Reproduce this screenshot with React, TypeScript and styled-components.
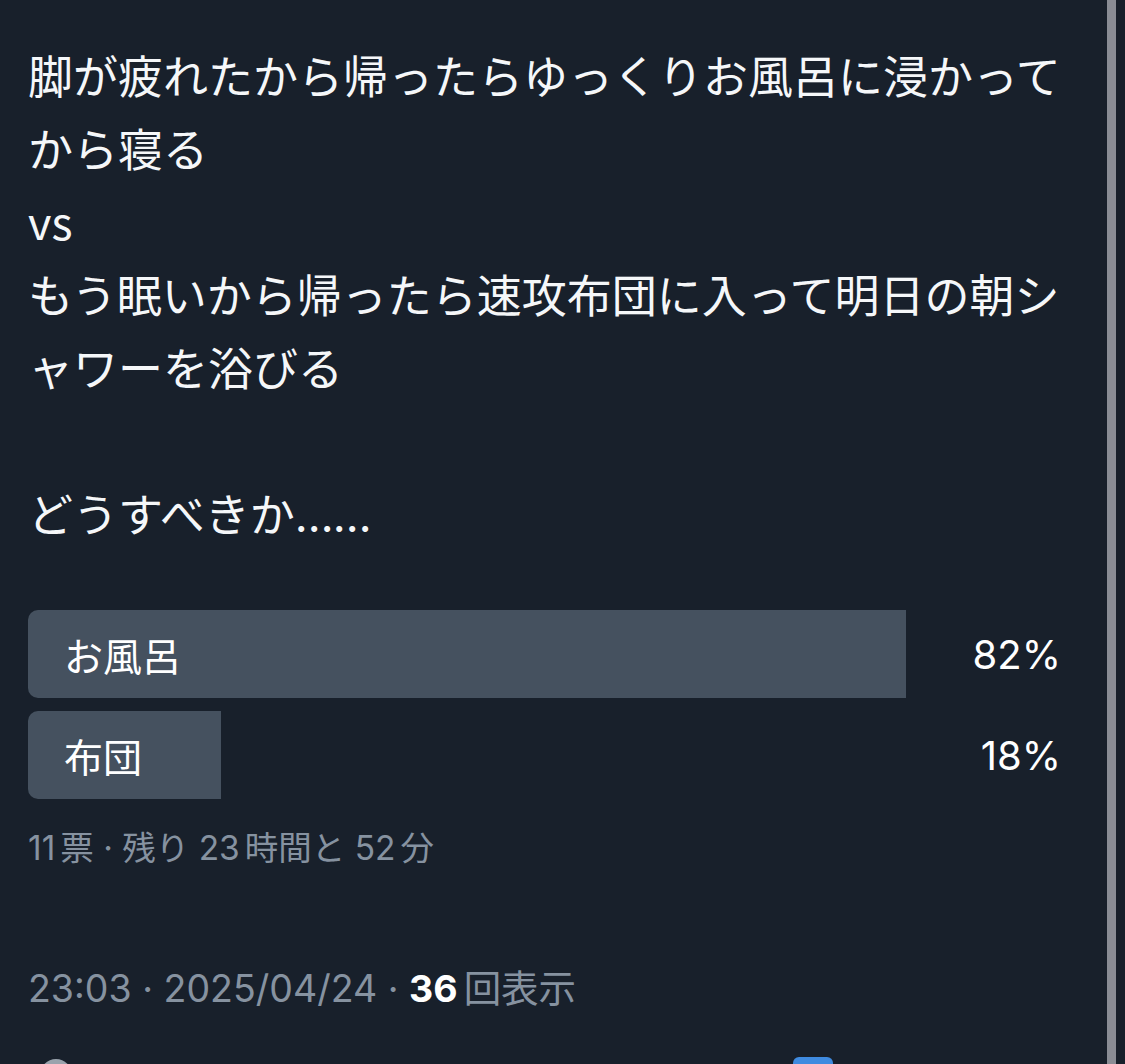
import React from "react";
import styled, { createGlobalStyle } from "styled-components";

const Global = createGlobalStyle`
  html, body { margin: 0; padding: 0; background: #18202b; }
  body { overflow: hidden; }
`;

const Page = styled.div`
  display: flex;
  width: 1125px;
  height: 1064px;
  overflow: hidden;
  background: #18202b;
`;

const Column = styled.main`
  width: 1107px;
  box-sizing: border-box;
  padding: 38px 0 0 28px;
  display: flex;
  flex-direction: column;
`;

const Divider = styled.div`
  width: 9px;
  height: 100%;
  background: #8a8d95;
`;

const Body = styled.div`
  color: #f5f7f9;
  font-family: "Noto Sans CJK JP", "Noto Sans", sans-serif;
  font-size: 45px;
  line-height: 73px;
`;

const Line = styled.div`
  min-height: 73px;
  white-space: nowrap;
`;

const Dots = styled.span`
  font-family: Inter, sans-serif;
  letter-spacing: -1px;
`;

const Poll = styled.div`
  margin-top: 58px;
  width: 1071px;
  display: flex;
  flex-direction: column;
  gap: 13px;
`;

const Option = styled.div`
  position: relative;
  height: 88px;
  display: flex;
  align-items: center;
`;

const Fill = styled.div`
  position: absolute;
  left: 0;
  top: 0;
  bottom: 0;
  background: #45515f;
  border-radius: 10px 0 0 10px;
`;

const Label = styled.span`
  position: relative;
  padding-left: 36px;
  flex: 1;
  color: #ffffff;
  font-family: "Noto Sans CJK JP", sans-serif;
  font-size: 39px;
`;

const Percent = styled.span`
  position: relative;
  padding-right: 38px;
  color: #ffffff;
  font-family: Inter, "Noto Sans CJK JP", sans-serif;
  font-size: 40px;
`;

const Meta = styled.div`
  margin-top: 28px;
  color: #8692a0;
  font-family: Inter, "Noto Sans CJK JP", sans-serif;
  font-size: 33.5px;
  line-height: 42px;
  white-space: nowrap;
`;

const Num = styled.span`
  margin-right: 5px;
`;

const Stamp = styled.div`
  margin-top: 98px;
  color: #8692a0;
  font-family: Inter, "Noto Sans CJK JP", sans-serif;
  font-size: 37.5px;
  line-height: 44px;
  white-space: nowrap;
`;

const Strong = styled.b`
  color: #ffffff;
  font-weight: 700;
  margin-right: 6px;
`;

const Actions = styled.div`
  margin-top: 46px;
  display: flex;
  align-items: flex-start;
  height: 40px;
`;

const ActionSlot = styled.div<{ $w: number }>`
  width: ${(p) => p.$w}px;
  flex: none;
`;

const polls = [
  { label: "お風呂", pct: 82 },
  { label: "布団", pct: 18 },
];

export default function App() {
  return (
    <Page>
      <Global />
      <Column>
        <Body>
          <Line>脚が疲れたから帰ったらゆっくりお風呂に浸かって</Line>
          <Line>から寝る</Line>
          <Line>vs</Line>
          <Line>もう眠いから帰ったら速攻布団に入って明日の朝シ</Line>
          <Line>ャワーを浴びる</Line>
          <Line />
          <Line>
            どうすべきか<Dots>……</Dots>
          </Line>
        </Body>
        <Poll>
          {polls.map((p) => (
            <Option key={p.label}>
              <Fill style={{ width: `${p.pct}%` }} />
              <Label>{p.label}</Label>
              <Percent>{p.pct}%</Percent>
            </Option>
          ))}
        </Poll>
        <Meta>
          <Num>11</Num>票 · 残り <Num>23</Num>時間と <Num>52</Num>分
        </Meta>
        <Stamp>
          23:03 · 2025/04/24 · <Strong>36</Strong>回表示
        </Stamp>
        <Actions>
          <ActionSlot $w={12} />
          <ActionSlot $w={40}>
            <svg width="40" height="40" viewBox="0 0 40 40">
              <circle cx="16" cy="18" r="16" fill="#9aa3ad" />
            </svg>
          </ActionSlot>
          <ActionSlot $w={713} />
          <ActionSlot $w={40}>
            <svg width="40" height="40" viewBox="0 0 40 40">
              <rect x="0" y="0" width="40" height="40" rx="6" fill="#3f8be0" />
            </svg>
          </ActionSlot>
        </Actions>
      </Column>
      <Divider />
    </Page>
  );
}
